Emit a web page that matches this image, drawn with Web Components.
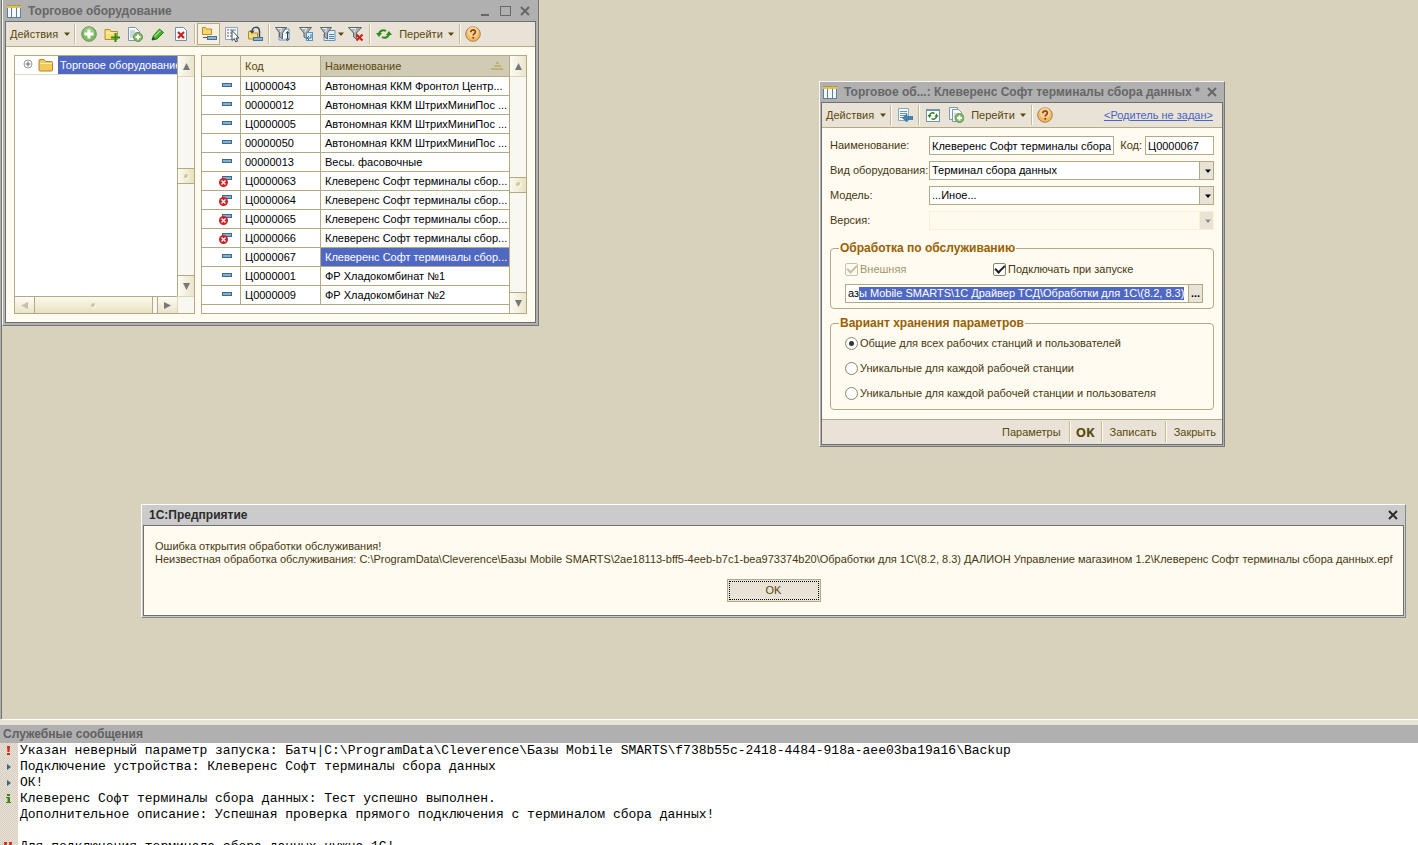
<!DOCTYPE html>
<html lang="ru">
<head>
<meta charset="utf-8">
<title>1С:Предприятие</title>
<style>
  html, body { margin: 0; height: 100%; overflow: hidden; }
  body {
    font: 11px/13px "Liberation Sans", Arial, sans-serif;
    color: #46370f;
    --frame: #b0b0b0; --edge: #6f6f6f; --line: #b3aa84; --bar: #e9e3d7;
    --paper: #fffbf0; --desk: #d8d2bd; --pick: #4f68c2; --ink: #5a480c;
  }
</style>
</head>
<body>
<app-shell>
  <mdi-window slot="desk" class="list" caption="Торговое оборудование" icon="table" resizable>
    <tool-bar slot="bar">
      <tool-button label="Действия" drop></tool-button>
      <tool-sep></tool-sep>
      <tool-button icon="add" hint="Добавить"></tool-button>
      <tool-button icon="addfolder" hint="Новая группа"></tool-button>
      <tool-button icon="copy" hint="Скопировать"></tool-button>
      <tool-button icon="edit" hint="Изменить"></tool-button>
      <tool-button icon="remove" hint="Пометить на удаление"></tool-button>
      <tool-sep></tool-sep>
      <tool-button icon="tree" hint="Иерархический просмотр" pressed></tool-button>
      <tool-button icon="move" hint="Переместить в группу"></tool-button>
      <tool-button icon="up" hint="На уровень вверх"></tool-button>
      <tool-sep></tool-sep>
      <tool-button icon="filterset" hint="Отбор и сортировка"></tool-button>
      <tool-button icon="filterval" hint="Отбор по значению"></tool-button>
      <tool-button icon="filterhist" hint="История отборов" drop></tool-button>
      <tool-button icon="filteroff" hint="Отключить отбор"></tool-button>
      <tool-sep></tool-sep>
      <tool-button icon="refresh" hint="Обновить"></tool-button>
      <tool-button label="Перейти" drop></tool-button>
      <tool-sep></tool-sep>
      <tool-button icon="help" hint="Справка"></tool-button>
    </tool-bar>
    <equipment-list></equipment-list>
  </mdi-window>

  <mdi-window slot="desk" class="card" caption="Торговое об...: Клеверенс Софт терминалы сбора данных *" icon="table">
    <tool-bar slot="bar">
      <tool-button label="Действия" drop></tool-button>
      <tool-sep></tool-sep>
      <tool-button icon="find" hint="Найти в списке"></tool-button>
      <tool-sep></tool-sep>
      <tool-button icon="reread" hint="Перечитать"></tool-button>
      <tool-button icon="copy2" hint="Скопировать"></tool-button>
      <tool-button label="Перейти" drop></tool-button>
      <tool-sep></tool-sep>
      <tool-button icon="help" hint="Справка"></tool-button>
      <parent-link slot="end">&lt;Родитель не задан&gt;</parent-link>
    </tool-bar>
    <equipment-card></equipment-card>
  </mdi-window>

  <error-dialog slot="desk" caption="1С:Предприятие">
    Ошибка открытия обработки обслуживания!<br>
    Неизвестная обработка обслуживания: C:\ProgramData\Cleverence\Базы Mobile SMARTS\2ae18113-bff5-4eeb-b7c1-bea973374b20\Обработки для 1С\(8.2, 8.3) ДАЛИОН Управление магазином 1.2\Клеверенс Софт терминалы сбора данных.epf
  </error-dialog>

  <message-log slot="dock" caption="Служебные сообщения">
    <log-line kind="error">Указан неверный параметр запуска: Батч|C:\ProgramData\Cleverence\Базы Mobile SMARTS\f738b55c-2418-4484-918a-aee03ba19a16\Backup</log-line>
    <log-line kind="note">Подключение устройства: Клеверенс Софт терминалы сбора данных</log-line>
    <log-line kind="note">ОК!</log-line>
    <log-line kind="info">Клеверенс Софт терминалы сбора данных: Тест успешно выполнен.</log-line>
    <log-line>Дополнительное описание: Успешная проверка прямого подключения с терминалом сбора данных!</log-line>
    <log-line></log-line>
    <log-line kind="alert">Для подключения терминала сбора данных нужна 1С!</log-line>
  </message-log>
</app-shell>

<script>
const ICONS = {
  table: '<path d="M2 5h12v9H2z" fill="#f4f8fa"/><path d="M1 2h4v3H1zM6 2h4v3H6zM11 2h4v3h-4z" fill="#e8c54a"/><path d="M1 2h4v1H1zM6 2h4v1H6zM11 2h4v1h-4z" fill="#b8922c"/><path d="M1.500 5v9M5.500 5v9M10.500 5v9M14.500 5v9M1 14.500h14" stroke="#5d7f98" fill="none"/>',
  add: '<circle cx="8" cy="8" r="7.300" fill="#7dbb5c" stroke="#6f8f62"/><circle cx="8" cy="6" r="5" fill="#a9d692" opacity=".6"/><path d="M8 3.500v9M3.500 8h9" stroke="#fff" stroke-width="3"/>',
  addfolder: '<path d="M1 3.500h5l1 2h6.500v8H1z" fill="#f8dc78" stroke="#b48f2c"/><path d="M2 7h11" stroke="#fff3bd"/><path d="M11.500 7v9M7 11.500h9" stroke="#2e8a16" stroke-width="2"/>',
  copy: '<path d="M1.500 1.500h7l4 4v9h-11z" fill="#f4f8fa" stroke="#7d99a8"/><path d="M3 5h5M3 7h7M3 9h5M3 11h4" stroke="#9fb6c2"/><circle cx="11" cy="11" r="4.500" fill="#7dbb5c" stroke="#6f8f62"/><path d="M11 8.500v5M8.500 11h5" stroke="#fff" stroke-width="2"/>',
  copy2: '<path d="M1.500.500h8v12h-8z" fill="#f4f8fa" stroke="#7d99a8"/><path d="M4.500 2.500h6l3 3v9h-9z" fill="#f4f8fa" stroke="#7d99a8"/><path d="M6 7h5M6 9h3" stroke="#9fb6c2"/><circle cx="11.500" cy="11" r="4.500" fill="#7dbb5c" stroke="#6f8f62"/><path d="M11.500 8.500v5M9 11h5" stroke="#fff" stroke-width="2"/>',
  edit: '<path d="M2 14l1.500-4.500L9.500 3l4 3.500-6.500 6.500z" fill="#46b02a" stroke="#2a7814"/><path d="M4.500 10.500l6-6" stroke="#98e07c" stroke-width="1.500"/><path d="M2 14l1-3 2 2z" fill="#23400f"/>',
  remove: '<path d="M2.500 1.500h8l3 3v10h-11z" fill="#f6fafc" stroke="#7391a4"/><path d="M5 6l6 6M11 6l-6 6" stroke="#cc2418" stroke-width="2.200"/>',
  tree: '<path d="M1.500 1.500h3l1 1.500h5v5.500h-9z" fill="#f6d56c" stroke="#b48f2c"/><path d="M2 11.500h4" stroke="#555" fill="none"/><rect x="6.500" y="10.500" width="9" height="3" fill="#8bb4d4" stroke="#4a7190"/>',
  move: '<path d="M1.500 1.500h12v12h-12z" fill="#f3f8fb" stroke="#8ca7ba"/><path d="M3 4h2M3 7h2M3 10h2" stroke="#c63f34"/><path d="M6 4h6M6 7h2M6 10h2" stroke="#4a7fa6"/><path d="M8 4.500v10l2.300-2 1.500 3.500 1.700-.8-1.500-3.200H15z" fill="#fff" stroke="#3b4a55"/>',
  up: '<path d="M1.500 5.500h4l1 1.500h4v6h-9z" fill="#f8dc78" stroke="#b48f2c"/><path d="M5 6c0-6 7-6 7.500-1v6" stroke="#3a4a58" stroke-width="1.500" fill="none"/><path d="M2.500 4.500h5L5 8z" fill="#3a4a58"/><rect x="6.500" y="11.500" width="9" height="3" fill="#8bb4d4" stroke="#4a7190"/>',
  filterset: '<path d="M8 3h6v11H4V7" fill="#f3f8fb" stroke="#6c8fa8"/><path d="M.5 1.500h11L7.500 7v6l-3-2V7z" fill="#aab0b4" stroke="#5f666b"/><path d="M2.500 2.500h4L5.500 6" stroke="#eef0f1" fill="none"/><path d="M12.500 6v7M11 7.500l1.500-2 1.500 2M11 12.500l1.500 2 1.500-2" stroke="#23435c" fill="none"/>',
  filterval: '<path d="M1.500 1.500h12L9 7v6l-3-2V7z" fill="#aab0b4" stroke="#5f666b"/><path d="M3.500 2.500h5L7 6" stroke="#eef0f1" fill="none"/><rect x="8.500" y="6.500" width="6" height="8" fill="#dcecf7" stroke="#5f93bc"/><path d="M13 8v4h-3M11 10l-2 2 2 2" stroke="#2e6f9f" fill="none"/>',
  filterhist: '<path d="M8 4.500h7v10H4V8" fill="#e3f0f8" stroke="#6c8fa8"/><path d="M.5 1.500h11L7.500 7v6l-3-2V7z" fill="#aab0b4" stroke="#5f666b"/><path d="M2.500 2.500h4L5.500 6" stroke="#eef0f1" fill="none"/><path d="M9 8.500h5M9 10.500h5M9 12.500h5" stroke="#4a85b3"/>',
  filteroff: '<path d="M.5 1.500h13L8.500 7v6l-3-2V7z" fill="#aab0b4" stroke="#5f666b"/><path d="M2.500 2.500h5L6.500 6" stroke="#eef0f1" fill="none"/><path d="M8.500 8.500l6 6M14.500 8.500l-6 6" stroke="#cc2418" stroke-width="2.200"/>',
  refresh: '<path d="M3 9c0-4 4-6 7-4" stroke="#2f8a1c" stroke-width="2" fill="none"/><path d="M13 7c0 4-4 6-7 4" stroke="#2f8a1c" stroke-width="2" fill="none"/><path d="M0 7h6l-3 4zM10 9h6l-3-4z" fill="#2f8a1c"/>',
  help: '<circle cx="8" cy="8" r="7.300" fill="#f6b764" stroke="#a4814e"/><circle cx="8" cy="6" r="5.500" fill="#fbd9a4" opacity=".75"/><path d="M5.800 6.200c0-3 4.600-3 4.600-.2 0 1.600-2.200 1.700-2.200 3.500" stroke="#8a3f0c" stroke-width="1.600" fill="none"/><circle cx="8.200" cy="11.700" r="1" fill="#8a3f0c"/>',
  find: '<path d="M1.500 1.500h10v12h-10z" fill="#f3f8fb" stroke="#8ca7ba"/><path d="M3 4.500h7M3 6.500h7M3 8.500h7M3 10.500h4" stroke="#6c93ae"/><path d="M5.500 11l4.500-4v2.500h6v3h-6V15z" fill="#3f83b4" stroke="#27608a" stroke-width=".6"/>',
  reread: '<rect x="1.500" y="2.500" width="13" height="12" fill="#fff" stroke="#6f94ab"/><path d="M1 3h14" stroke="#6f94ab" stroke-width="2"/><path d="M4.500 9c0-3 3-4 5-2.500M11.500 9c0 3-3 4-5 2.500" stroke="#2f7a1c" stroke-width="1.500" fill="none"/><path d="M2.500 8h4l-2 3zM9.500 9.500h4l-2-3z" fill="#2f7a1c"/>',
  folder: '<path d="M1 3.500q0-1 1-1h4l1.500 2h6q1 0 1 1V13q0 1-1 1h-11.500q-1 0-1-1z" fill="#f2c95c" stroke="#ad8430"/><path d="M2 6.500h12" stroke="#fff0b8"/>',
  expand: '<circle cx="8" cy="8" r="4" fill="#fff" stroke="#9a9a9a"/><path d="M5.500 8h5M8 5.500v5" stroke="#666"/>',
  item: '<rect x="4.500" y="5.500" width="9" height="3" fill="#80b0d4" stroke="#3f6a8c"/>',
  marked: '<rect x="4.500" y="3.500" width="9" height="3" fill="#80b0d4" stroke="#3f6a8c"/><circle cx="5.500" cy="9.500" r="4.500" fill="#cf1f24"/><path d="M3.500 7.500l4 4M7.500 7.500l-4 4" stroke="#fff" stroke-width="1.300"/>',
  drop: '<path d="M5 6.500h6L8 10z" fill="currentColor"/>',
  error: '<path d="M7 3h3l-.5 6h-2zM7 10h3v2H7z" fill="#d42a14"/>',
  note: '<path d="M7 5l4 3-4 3z" fill="#3c6480"/>',
  info: '<path d="M7 3h3v2H7zM6 6h4v5h1v1H6v-1h1.500V7H6z" fill="#3d8414"/>',
  alert: '<path d="M4 3h3l-.5 6h-2zM9 3h3l-.5 6h-2z" fill="#d42a14"/>',
  min: '<path d="M4 12h8" stroke="currentColor" stroke-width="2"/>',
  max: '<path d="M3.500 3.500h10v9h-10z" fill="none" stroke="currentColor"/><path d="M3 3.500h11" stroke="currentColor"/>',
  close: '<path d="M4 4l8 8M12 4l-8 8" stroke="currentColor" stroke-width="2"/>',
  sort: '<path d="M7 4h3v2H7zM5 7h7v2H5zM2 10h12v2H2z" fill="#c3b276"/>'
};
const ico = n => `<svg viewBox="0 0 16 16" width="16" height="16" aria-hidden="true">${ICONS[n] || ''}</svg>`;

const SHARED = `
  :host, * { box-sizing: border-box; }
  svg { display: block; flex: none; }
  button { font: inherit; color: inherit; background: none; border: 0; margin: 0; padding: 0; }
`;

class View extends HTMLElement {
  connectedCallback() {
    if (this.shadowRoot) return;
    const t = document.createElement('template');
    t.innerHTML = `<style>${SHARED}${this.css()}</style>${this.html()}`;
    this.attachShadow({ mode: 'open' }).append(t.content.cloneNode(true));
    this.ready();
  }
  ready() {}
  attr(n) { return this.getAttribute(n) || ''; }
}

customElements.define('app-shell', class extends View {
  css() { return `
    :host { display: flex; flex-direction: column; height: 100vh; }
    main { flex: 1; position: relative; min-height: 0; overflow: hidden; background: var(--desk);
      border-left: 1px solid var(--frame); border-bottom: 1px solid #fff; box-shadow: inset 1px 0 #77756c; }
    ::slotted(.list) { position: absolute; left: 1px; top: -1px; width: 537px; }
    ::slotted(.card) { position: absolute; left: 818px; top: 81px; width: 406px; }
    ::slotted(error-dialog) { position: absolute; left: 140px; right: 12px; top: 504px; }
  `; }
  html() { return `<main><slot name="desk"></slot></main><slot name="dock"></slot>`; }
});

customElements.define('mdi-window', class extends View {
  css() { return `
    :host { display: block; border: 1px solid #f6f6f4; border-right-color: #777; border-bottom-color: #777;
      background: var(--frame); padding: 0 1px 1px; }
    :host([resizable]) { padding: 0 2px 2px; }
    header { display: flex; align-items: center; height: 20px; padding: 0 3px 0 1px; color: #666; }
    :host([resizable]) header { height: 21px; }
    h2 { flex: 1; margin: 0 0 0 6px; font: bold 12px/16px "Liberation Sans", Arial, sans-serif; white-space: nowrap; overflow: hidden; }
    header div { display: flex; gap: 4px; }
    section { border: 1px solid var(--edge); background: var(--paper); }
  `; }
  html() {
    const b = (n, l) => `<button aria-label="${l}">${ico(n)}</button>`;
    return `<header>${ico(this.attr('icon'))}<h2>${this.attr('caption')}</h2><div>${
      this.hasAttribute('resizable') ? b('min', 'Свернуть') + b('max', 'Развернуть') : ''}${b('close', 'Закрыть')}</div></header>
      <section><slot name="bar"></slot><slot></slot></section>`;
  }
});

customElements.define('tool-bar', class extends View {
  css() { return `
    :host { display: flex; align-items: center; height: 25px; background: var(--bar);
      border-bottom: 1px solid var(--line); color: var(--ink); }
    ::slotted([slot=end]) { margin-left: auto; margin-right: 9px; }
  `; }
  html() { return `<slot></slot><slot name="end"></slot>`; }
});

customElements.define('tool-sep', class extends View {
  css() { return `
    :host { display: block; flex: none; width: 2px; height: 20px; margin: 0 1px 0 2px;
      background: linear-gradient(90deg, #c3ba94 50%, #fffdf4 50%); }
  `; }
  html() { return ''; }
});

customElements.define('tool-button', class extends View {
  css() { return `
    :host { display: block; flex: none; }
    button { display: flex; align-items: center; justify-content: center; height: 22px; min-width: 23px; }
    .text { padding: 0 2px 0 4px; }
    .arrow { width: 7px; margin-left: 5px; overflow: hidden; display: flex; justify-content: center; }
    .icon .arrow { margin-left: 1px; }
    .icon.dropped { padding-left: 3px; }
    :host([pressed]) button { border: 1px solid var(--line); background: #f5f0e2; }
  `; }
  html() {
    const drop = this.hasAttribute('drop') ? `<span class="arrow">${ico('drop')}</span>` : '';
    return this.attr('label')
      ? `<button class="text">${this.attr('label')}${drop}</button>`
      : `<button class="icon ${drop ? 'dropped' : ''}" aria-label="${this.attr('hint')}">${ico(this.attr('icon'))}${drop}</button>`;
  }
});

customElements.define('parent-link', class extends View {
  css() { return `:host { display: block; } a { color: #4a63c4; text-decoration: underline; white-space: nowrap; }`; }
  html() { return `<a href="#"><slot></slot></a>`; }
});

customElements.define('scroll-bar', class extends View {
  css() { return `
    :host { display: flex; flex-direction: column; width: 17px; border-left: 1px solid var(--line); background: #f9f7f1; color: #777; }
    .btn { height: 21px; display: grid; place-items: center; background: linear-gradient(90deg, #fdfcf5, #eae4ca); }
    .first { border-bottom: 1px solid #ddd6ba; } .last { border-top: 1px solid var(--line); }
    .thumb { height: 16px; flex: none; display: grid; place-items: center; border: solid var(--line); border-width: 1px 0;
      background: linear-gradient(90deg, #fbf9ec, #e9e2c0); }
    .thumb i { width: 5px; height: 5px; border-radius: 50%; background: #cfc8a4; box-shadow: inset -1px -1px #fff; }
    .gap { flex: 1; }
    .before { flex: 1; }
    :host([horizontal]) { flex-direction: row; width: auto; height: 17px; border-left: 0; border-top: 1px solid var(--line); }
    :host([horizontal]) .btn { width: 20px; height: auto; background: linear-gradient(#fdfcf5, #eae4ca); }
    :host([horizontal]) .first { border: 0; border-right: 1px solid var(--line); color: #c6c1ab; }
    :host([horizontal]) .last { border: 0; border-left: 1px solid var(--line); }
    :host([horizontal]) .thumb { flex: 1; height: auto; border-width: 0 1px 0 0; background: linear-gradient(#fbf9ec, #e9e2c0); }
    :host([horizontal]) .before { display: none; }
    :host([horizontal]) .gap { flex: none; width: 4px; }
  `; }
  html() {
    const h = this.hasAttribute('horizontal');
    const tri = d => `<svg viewBox="0 0 9 9" width="9" height="9"><path d="${d}" fill="currentColor"/></svg>`;
    return `<button class="btn first" aria-label="Назад">${tri(h ? 'M8 1v7L1 4.500z' : 'M1 8h7L4.500 1z')}</button>
      <div class="gap before"></div><div class="thumb"><i></i></div><div class="gap"></div>
      <button class="btn last" aria-label="Вперёд">${tri(h ? 'M1 1v7l7-3.500z' : 'M1 1h7L4.500 8z')}</button>`;
  }
});

const ROWS = [
  ['Ц0000043', 'Автономная ККМ Фронтол Центр...'],
  ['00000012', 'Автономная ККМ ШтрихМиниПос ...'],
  ['Ц0000005', 'Автономная ККМ ШтрихМиниПос ...'],
  ['00000050', 'Автономная ККМ ШтрихМиниПос ...'],
  ['00000013', 'Весы. фасовочные'],
  ['Ц0000063', 'Клеверенс Софт терминалы сбор...', 'marked'],
  ['Ц0000064', 'Клеверенс Софт терминалы сбор...', 'marked'],
  ['Ц0000065', 'Клеверенс Софт терминалы сбор...', 'marked'],
  ['Ц0000066', 'Клеверенс Софт терминалы сбор...', 'marked'],
  ['Ц0000067', 'Клеверенс Софт терминалы сбор...', 'item', true],
  ['Ц0000001', 'ФР Хладокомбинат №1'],
  ['Ц0000009', 'ФР Хладокомбинат №2']
];

customElements.define('equipment-list', class extends View {
  css() { return `
    :host { display: grid; grid-template-columns: 181px 1fr; gap: 6px; padding: 8px 8px 8px 8px; }
    .tree, .grid { display: grid; border: 1px solid var(--line); background: #fff; height: 259px; }
    .tree { grid-template: 1fr 17px / 1fr 17px; }
    .node { display: flex; align-items: center; height: 19px; border-bottom: 1px solid #ddd8c4; overflow: hidden; }
    .node svg:first-child { margin: 0 2px 3px 5px; }
    .node span { margin-left: 4px; padding-left: 2px; flex: 1; line-height: 19px; background: var(--pick); color: #fff; white-space: nowrap; }
    .corner { border-top: 1px solid #ddd6ba; border-left: 1px solid #ddd6ba; background: #f9f7f1; }
    .grid { grid-template-columns: 1fr 17px; color: #000; }
    table { border-collapse: separate; border-spacing: 0; table-layout: fixed; width: 100%; align-self: start; }
    th, td { height: 19px; padding: 0 0 0 4px; border: solid var(--line); border-width: 0 1px 1px 0; text-align: left;
      font-weight: normal; white-space: nowrap; overflow: hidden; line-height: 13px; }
    th { height: 21px; background: #f4f0dc; color: var(--ink); }
    th:last-child, td:last-child { border-right: 0; }
    th:last-child { background: #cfcbb4; }
    th div { display: flex; align-items: center; justify-content: space-between; padding-right: 4px; }
    td:first-child { padding-left: 16px; }
    .on td:last-child { background: var(--pick); color: #fff; }
  `; }
  html() { return `
    <div class="tree">
      <div class="node">${ico('expand')}${ico('folder')}<span>Торговое оборудование</span></div>
      <scroll-bar></scroll-bar><scroll-bar horizontal></scroll-bar><div class="corner"></div>
    </div>
    <div class="grid">
      <table>
        <colgroup><col style="width:39px"><col style="width:80px"><col></colgroup>
        <thead><tr><th></th><th>Код</th><th><div>Наименование${ico('sort')}</div></th></tr></thead>
        <tbody>${ROWS.map(([c, n, k, on]) => `<tr${on ? ' class="on"' : ''}><td>${ico(k || 'item')}</td><td>${c}</td><td>${n}</td></tr>`).join('')}</tbody>
      </table>
      <scroll-bar></scroll-bar>
    </div>`; }
});

customElements.define('combo-box', class extends View {
  css() { return `
    :host { display: grid; grid-template-columns: 99px 1fr; align-items: center; }
    label { white-space: nowrap; }
    div { display: flex; height: 19px; border: 1px solid var(--line); background: #fff; }
    select { flex: 1; min-width: 0; appearance: none; border: 0; outline: 0; background: none; font: inherit; color: #000; padding: 0 0 0 2px; margin: 0; opacity: 1; }
    span { display: grid; place-items: center; width: 14px; background: var(--bar); border-left: 1px solid var(--line); color: #000; overflow: hidden; pointer-events: none; }
    :host([disabled]) div { border-color: #fbf0cf; background: #fffaee; }
    :host([disabled]) span { border-color: #fbf0cf; color: #938e80; }
  `; }
  html() { return `<label for="s">${this.attr('label')}:</label><div><select id="s" ${this.hasAttribute('disabled') ? 'disabled' : ''}><option>${this.attr('value')}</option></select><span>${ico('drop')}</span></div>`; }
});

customElements.define('equipment-card', class extends View {
  css() { return `
    :host { display: block; }
    form { display: grid; gap: 6px; padding: 8px 8px 9px; }
    .name { display: grid; grid-template-columns: 99px 1fr auto 69px; align-items: center; }
    .name label + input + label { margin: 0 3px 0 6px; }
    label { white-space: nowrap; }
    .text { width: 100%; min-width: 0; height: 19px; border: 1px solid var(--line); background: #fff; font: inherit; color: #000; padding: 0 2px; outline: 0; border-radius: 0; }
    fieldset { margin: 0; min-width: 0; padding: 0 10px 5px 14px; border: 1px solid var(--line); border-radius: 4px; }
    legend { margin-left: -6px; padding: 0 1px; font: bold 12px/13px "Liberation Sans", Arial, sans-serif; color: #996000; }
    .source { margin-top: 6px; }
    .storage { margin-top: 2px; padding-bottom: 3px; }
    .checks { display: grid; grid-template-columns: 148px 1fr; height: 29px; align-items: center; }
    .checks label, .radios label { display: flex; align-items: center; gap: 2px; }
    input[type=checkbox], input[type=radio] { appearance: none; flex: none; width: 13px; height: 13px; margin: 0; border: 1px solid #8b8668; background: #fff; display: grid; place-items: center; }
    input[type=checkbox] { border-radius: 2px; }
    input[type=checkbox]:checked::after { content: ""; width: 8px; height: 4px; margin-top: -3px; border: solid #222; border-width: 0 0 2px 2px; transform: rotate(-45deg); }
    input:disabled { border-color: #c8c2aa; background: #fffbf0; }
    input[type=checkbox]:disabled::after { border-color: #c4bea6; }
    .off { color: #a39568; }
    input[type=radio] { border-radius: 50%; }
    input[type=radio]:checked::after { content: ""; width: 5px; height: 5px; border-radius: 50%; background: #333; }
    .path { display: flex; height: 19px; border: 1px solid var(--line); background: #fff; }
    .path input { flex: 1; min-width: 0; height: 13px; margin: 2px 1px 0 2px; border: 0; padding: 0; outline: 0; font: inherit; color: #000; background: none; caret-color: transparent; }
    .path input::selection { background: #4f68c2; color: #fff; }
    .path button { width: 14px; background: var(--bar); border-left: 1px solid var(--line); color: #000; font-weight: bold; }
    .radios { display: grid; grid-auto-rows: 25px; align-items: center; margin-top: 1px; }
    footer { display: flex; align-items: center; justify-content: flex-end; height: 25px; border-top: 1px solid var(--line); background: var(--bar); color: var(--ink); }
    footer button { padding: 0 6px; }
    footer .main { padding: 0 4px; font: bold 13px/16px "Open Sans", "Liberation Sans", sans-serif; }
  `; }
  html() { return `
    <form>
      <div class="name"><label for="n">Наименование:</label><input class="text" id="n" value="Клеверенс Софт терминалы сбора данных">
        <label for="c">Код:</label><input class="text" id="c" value="Ц0000067"></div>
      <combo-box label="Вид оборудования" value="Терминал сбора данных"></combo-box>
      <combo-box label="Модель" value="...Иное..."></combo-box>
      <combo-box label="Версия" value="" disabled></combo-box>
      <fieldset class="source">
        <legend>Обработка по обслуживанию</legend>
        <div class="checks">
          <label class="off"><input type="checkbox" checked disabled>Внешняя</label>
          <label><input type="checkbox" checked>Подключать при запуске</label>
        </div>
        <div class="path"><input id="path" aria-label="Файл обработки" value="азы Mobile SMARTS\\1С Драйвер ТСД\\Обработки для 1С\\(8.2, 8.3)"><button type="button" aria-label="Выбрать">...</button></div>
      </fieldset>
      <fieldset class="storage">
        <legend>Вариант хранения параметров</legend>
        <div class="radios">
          <label><input type="radio" name="s" checked>Общие для всех рабочих станций и пользователей</label>
          <label><input type="radio" name="s">Уникальные для каждой рабочей станции</label>
          <label><input type="radio" name="s">Уникальные для каждой рабочей станции и пользователя</label>
        </div>
      </fieldset>
    </form>
    <footer><button>Параметры</button><tool-sep></tool-sep><button class="main">OK</button><tool-sep></tool-sep><button>Записать</button><tool-sep></tool-sep><button>Закрыть</button></footer>`; }
  ready() {
    const p = this.shadowRoot.getElementById('path');
    p.focus();
    p.setSelectionRange(2, p.value.length);
  }
});

customElements.define('error-dialog', class extends View {
  css() { return `
    :host { display: block; border: 1px solid #fff; border-right-color: #888; border-bottom-color: #888; background: #cbcbcb; padding: 0 1px 1px; }
    header { display: flex; align-items: center; justify-content: space-between; height: 20px; padding: 0 3px 0 6px; color: #2c2c2c; }
    h2 { margin: 0; font: bold 12px/16px "Liberation Sans", Arial, sans-serif; }
    section { border: 1px solid var(--edge); background: var(--paper); padding: 14px 11px 13px; }
    p { margin: 0 0 13px; white-space: nowrap; }
    .ok { display: block; width: 94px; height: 23px; margin: 0 auto; background: var(--bar); border: 1px solid var(--line);
      outline: 1px dotted #000; outline-offset: -3px; color: var(--ink); }
  `; }
  html() { return `<header><h2>${this.attr('caption')}</h2><button aria-label="Закрыть">${ico('close')}</button></header>
    <section><p><slot></slot></p><button class="ok">OK</button></section>`; }
});

customElements.define('message-log', class extends View {
  css() { return `
    :host { display: flex; flex-direction: column; flex: none; height: 125px; overflow: hidden; border-top: 5px solid var(--bar); background: #fff; }
    h2 { margin: 0; padding-left: 3px; font: bold 12px/18px "Liberation Sans", Arial, sans-serif; background: var(--frame); color: #606060; flex: none; }
  `; }
  html() { return `<h2>${this.attr('caption')}</h2><slot></slot>`; }
});

customElements.define('log-line', class extends View {
  css() { return `
    :host { display: flex; flex: none; height: 16px; color: #000; font: 13px/16px "Liberation Mono", "Courier New", monospace; white-space: pre; }
    span { width: 18px; margin-right: 2px; background: repeating-conic-gradient(#d5cdbf 0 25%, #e9e3d7 0 50%) 0 0 / 2px 2px; }
  `; }
  html() { return `<span>${ico(this.attr('kind'))}</span><slot></slot>`; }
});
</script>
</body>
</html>
